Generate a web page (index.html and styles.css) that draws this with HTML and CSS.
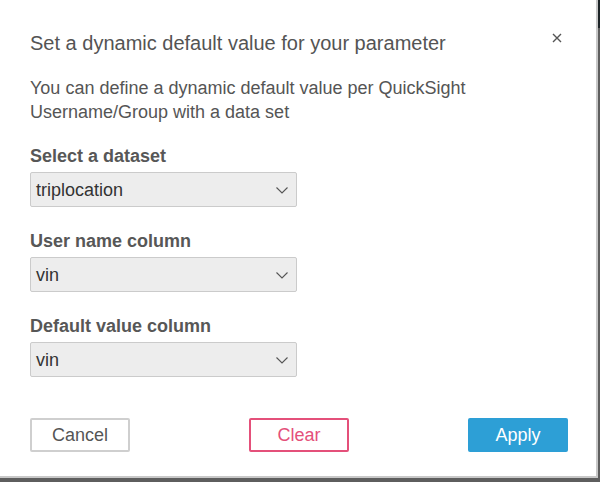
FILE: index.html
```html
<!DOCTYPE html>
<html>
<head>
<meta charset="utf-8">
<link rel="stylesheet" href="styles.css">
</head>
<body>
<div class="screen">
  <div class="dialog">
    <div class="header">
      <h1 class="title">Set a dynamic default value for your parameter</h1>
      <button class="close" aria-label="Close">
        <svg width="10" height="10" viewBox="0 0 10 10"><path d="M1 1 L9 9 M9 1 L1 9" stroke="#555" stroke-width="1.4" fill="none"/></svg>
      </button>
    </div>
    <p class="desc">You can define a dynamic default value per QuickSight Username/Group with a data set</p>
    <div class="field">
      <div class="label">Select a dataset</div>
      <div class="select"><span>triplocation</span><svg class="chev" width="12" height="7" viewBox="0 0 12 7"><path d="M0.5 0.5 L6 6 L11.5 0.5" stroke="#555" stroke-width="1.1" fill="none"/></svg></div>
    </div>
    <div class="field">
      <div class="label">User name column</div>
      <div class="select"><span>vin</span><svg class="chev" width="12" height="7" viewBox="0 0 12 7"><path d="M0.5 0.5 L6 6 L11.5 0.5" stroke="#555" stroke-width="1.1" fill="none"/></svg></div>
    </div>
    <div class="field">
      <div class="label">Default value column</div>
      <div class="select"><span>vin</span><svg class="chev" width="12" height="7" viewBox="0 0 12 7"><path d="M0.5 0.5 L6 6 L11.5 0.5" stroke="#555" stroke-width="1.1" fill="none"/></svg></div>
    </div>
    <div class="footer">
      <button class="btn btn-cancel">Cancel</button>
      <button class="btn btn-clear">Clear</button>
      <button class="btn btn-apply">Apply</button>
    </div>
  </div>
</div>
</body>
</html>
```
FILE: styles.css
```css
html, body {
  margin: 0;
  padding: 0;
}
body {
  width: 600px;
  height: 482px;
  overflow: hidden;
  background: #565656;
  font-family: "Liberation Sans", Arial, sans-serif;
}
.screen {
  display: flex;
  width: 600px;
  height: 482px;
  background: linear-gradient(to bottom, #1c2326 0, #1c2326 28px, #5e5e5e 28px);
}
.dialog {
  box-sizing: border-box;
  width: 598px;
  height: 478px;
  background: #fff;
  border-right: 2px solid #c8c8c8;
  border-bottom: 2px solid #c8c8c8;
  padding: 31px 0 0 30px;
}
.header {
  display: flex;
  justify-content: space-between;
  align-items: flex-start;
  padding-right: 34px;
}
.title {
  margin: 0;
  font-size: 20px;
  line-height: 24px;
  font-weight: normal;
  color: #545454;
}
.close {
  border: 0;
  background: none;
  padding: 0;
  margin-top: 2px;
  width: 10px;
  height: 10px;
  display: flex;
}
.desc {
  margin: 21px 0 0 0;
  width: 470px;
  font-size: 18px;
  line-height: 24px;
  color: #555;
}
.field {
  margin-top: 20px;
}
.field + .field {
  margin-top: 22px;
}
.label {
  font-size: 18px;
  line-height: 24px;
  font-weight: bold;
  color: #575757;
}
.select {
  box-sizing: border-box;
  margin-top: 4px;
  width: 267px;
  height: 35px;
  display: flex;
  align-items: center;
  justify-content: space-between;
  padding: 0 8px 0 5px;
  background: #ededed;
  border: 1.5px solid #cbcbcb;
  border-radius: 2px;
  font-size: 18px;
  line-height: 24px;
  color: #333;
}
.chev {
  margin-top: 1px;
}
.footer {
  display: flex;
  justify-content: space-between;
  margin-top: 41px;
  padding-right: 28px;
}
.btn {
  box-sizing: border-box;
  width: 100px;
  height: 34px;
  font-family: "Liberation Sans", Arial, sans-serif;
  font-size: 18px;
  border-radius: 2px;
  background: #fff;
  padding: 0;
}
.btn-cancel {
  border: 2px solid #cfcfcf;
  color: #555;
}
.btn-clear {
  border: 2px solid #e4507a;
  color: #e4507a;
}
.btn-apply {
  border: 0;
  background: #2d9fd6;
  color: #fff;
}
```
